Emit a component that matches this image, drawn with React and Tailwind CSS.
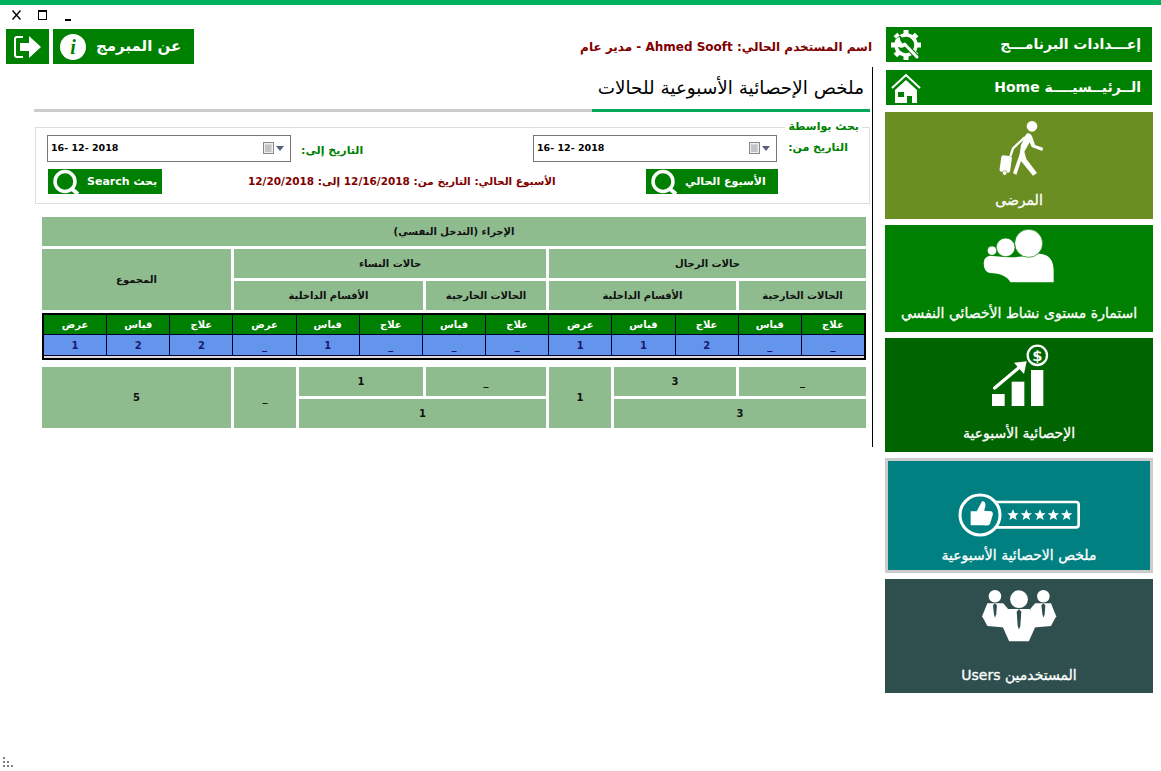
import React from 'react';

const GearIcon = () => (
  <svg width="30" height="30" viewBox="0 0 30 30">
    <g fill="#fff">
      {[0, 45, 90, 135, 180, 225, 270, 315].map((a) => (
        <rect key={a} x="12.5" y="0" width="5" height="6" transform={`rotate(${a} 15 15)`} />
      ))}
    </g>
    <circle cx="15" cy="15" r="10" fill="none" stroke="#fff" strokeWidth="3.5" />
    <path d="M7 7 L26 27" stroke="#008000" strokeWidth="5" fill="none" />
    <path d="M13.5 14 L26 27" stroke="#fff" strokeWidth="3" strokeLinecap="round" fill="none" />
    <path d="M8.5 7 A5.5 5.5 0 1 0 15.5 13.5 L12 14 L9.5 11 Z" fill="#fff" />
  </svg>
);

const HomeIcon = () => (
  <svg width="30" height="30" viewBox="0 0 30 30">
    <path d="M1 15 L15 2 L29 15" fill="none" stroke="#fff" strokeWidth="2" />
    <path d="M4 17 L15 7 L26 17 L26 30 L4 30 Z" fill="#fff" />
    <rect x="7" y="19" width="6" height="5" fill="#008000" />
    <rect x="16" y="23" width="5" height="7" fill="#008000" />
  </svg>
);

const ExitIcon = () => (
  <svg width="30" height="24" viewBox="0 0 30 24">
    <path d="M10 2 L4 2 Q2 2 2 4 L2 20 Q2 22 4 22 L10 22" fill="none" stroke="#fff" strokeWidth="2" />
    <path d="M7 8 L16 8 L16 1 L28 12 L16 23 L16 16 L7 16 Z" fill="#fff" />
  </svg>
);

const InfoIcon = () => (
  <div className="flex h-[26px] w-[26px] items-center justify-center rounded-full bg-white text-[20px] font-bold italic leading-none text-[#008000] [font-family:'Liberation_Serif',serif]">
    i
  </div>
);

const SearchIcon = () => (
  <svg width="32" height="25" viewBox="0 0 32 25" className="block">
    <circle cx="14" cy="12.5" r="10" fill="none" stroke="#fff" strokeWidth="3.5" />
    <path d="M21 20 L27 25" stroke="#fff" strokeWidth="4" />
  </svg>
);

const CalendarIcon = () => (
  <div className="flex items-center gap-px">
    <svg width="12" height="13" viewBox="0 0 12 13">
      <rect x="0.5" y="0.5" width="10" height="11" fill="#eceef2" stroke="#888" />
      <path d="M2 3 H9 M2 5 H9 M2 7 H9 M2 9 H9 M3 3 V10 M5 3 V10 M7 3 V10" stroke="#9a9a9a" strokeWidth="0.6" />
    </svg>
    <svg width="8" height="5" viewBox="0 0 8 5">
      <path d="M0 0 H8 L4 5 Z" fill="#56607a" />
    </svg>
  </div>
);

const TravelerIcon = () => (
  <svg width="48" height="58" viewBox="355 358 144 174">
    <circle cx="457" cy="380" r="16" fill="#fff" />
    <path d="M440 402 Q452 398 458 412 L466 436 L490 444 L488 454 L456 442 L450 428 L434 456 L440 478 L472 520 L460 528 L424 484 L410 526 L400 520 L420 464 L424 436 Z" fill="#fff" />
    <path d="M436 412 L400 446 L392 470" stroke="#fff" strokeWidth="7" fill="none" />
    <rect x="362" y="468" width="32" height="50" rx="6" fill="#fff" transform="rotate(8 379 494)" />
    <circle cx="375" cy="520" r="7" fill="#fff" stroke="#6b8e23" strokeWidth="2" />
  </svg>
);

const PeopleIcon = () => (
  <svg width="72" height="56" viewBox="310 688 216 168">
    <path d="M375 772 Q430 775 480 762 Q520 765 522 810 L522 848 L392 848 Q380 822 330 820 Q312 815 312 790 Q312 772 330 768 Z" fill="#fff" />
    <circle cx="447" cy="731" r="42" fill="#fff" stroke="#008000" strokeWidth="2" />
    <circle cx="378" cy="743" r="28" fill="#fff" stroke="#008000" strokeWidth="2" />
    <circle cx="337" cy="753" r="14" fill="#fff" stroke="#008000" strokeWidth="2" />
  </svg>
);

const ChartIcon = () => (
  <svg width="60" height="66" viewBox="325 25 180 198">
    <rect x="334" y="178" width="38" height="36" fill="#fff" />
    <rect x="393" y="141" width="38" height="73" fill="#fff" />
    <rect x="451" y="106" width="37" height="108" fill="#fff" />
    <path d="M342 160 L418 96" stroke="#fff" strokeWidth="10" strokeLinecap="round" />
    <path d="M400 84 L438 80 L430 118 Z" fill="#fff" />
    <circle cx="470" cy="62" r="29" fill="none" stroke="#fff" strokeWidth="7" />
    <text x="470" y="78" textAnchor="middle" fontSize="44" fontWeight="700" fill="#fff" fontFamily="'DejaVu Sans',sans-serif">$</text>
  </svg>
);

const Star = ({ x }) => (
  <path
    transform={`translate(${x} 541)`}
    d="M0 -17 L5 -5.5 L17 -5 L7.5 3 L11 15 L0 8.5 L-11 15 L-7.5 3 L-17 -5 L-5 -5.5 Z"
    fill="#fff"
  />
);

const RatingIcon = () => (
  <svg width="122" height="46" viewBox="232 472 366 138">
    <rect x="330" y="502" width="264" height="76" rx="8" fill="none" stroke="#fff" strokeWidth="8" />
    <circle cx="298" cy="541" r="60" fill="#008080" stroke="#fff" strokeWidth="9" />
    <path d="M270 530 L288 530 L304 500 Q316 498 314 516 L310 528 L332 530 Q340 534 334 548 L328 568 Q324 574 310 572 L270 572 Z" fill="#fff" />
    {[397, 437, 478, 518, 558].map((x) => (
      <Star key={x} x={x} />
    ))}
  </svg>
);

const UsersIcon = () => (
  <svg width="76" height="56" viewBox="303 760 230 170">
    <circle cx="345" cy="785" r="19" fill="#fff" />
    <circle cx="492" cy="785" r="19" fill="#fff" />
    <path d="M322 806 L370 806 L385 824 L375 880 L322 875 L306 846 Z" fill="#fff" />
    <path d="M515 806 L467 806 L452 824 L462 880 L515 875 L531 846 Z" fill="#fff" />
    <circle cx="418" cy="794" r="27" fill="#fff" />
    <path d="M385 824 L451 824 L472 868 L448 922 L388 922 L364 868 Z" fill="#fff" />
    <path d="M345 806 L339 812 L342 840 L345 850 L349 840 L351 812 Z" fill="#2f4f4f" />
    <path d="M492 806 L486 812 L489 840 L492 850 L496 840 L498 812 Z" fill="#2f4f4f" />
    <path d="M418 824 L411 832 L414 875 L418 886 L422 875 L425 832 Z" fill="#2f4f4f" />
  </svg>
);

const NavButton = ({ label, icon, className }) => (
  <div className={`flex h-[35px] w-[266px] items-center justify-between bg-[#008000] pl-[5px] pr-[11px] ${className}`}>
    {icon}
    <span dir="rtl" className="whitespace-nowrap text-[14px] font-bold text-white">{label}</span>
  </div>
);

const Tile = ({ label, icon, bg, h, iconH, extra = '' }) => (
  <div className={`flex w-[268px] flex-col items-center ${bg} ${h} ${extra}`}>
    <div className={`flex items-start justify-center ${iconH}`}>{icon}</div>
    <span dir="rtl" className="whitespace-nowrap text-[14px] leading-[18px] text-white [-webkit-text-stroke:0.3px_white]">{label}</span>
  </div>
);

const Cell = ({ children, className }) => (
  <div dir="rtl" className={`flex items-center justify-center bg-[#8fbc8f] text-[10px] font-bold text-[#111] ${className}`}>
    {children}
  </div>
);

const DateBox = () => (
  <div className="flex h-[27px] w-[244px] items-center justify-between border border-[#777] bg-white pl-[3px] pr-[6px] text-[9.5px] font-bold text-black">
    <span>16- 12- 2018</span>
    <CalendarIcon />
  </div>
);

const GreenBtn = ({ label, w }) => (
  <div className={`flex h-[25px] items-center overflow-hidden bg-[#008000] pl-[3px] ${w}`}>
    <SearchIcon />
    <span dir="rtl" className="ml-[4px] whitespace-nowrap pt-[2px] text-[11px] font-bold text-white">{label}</span>
  </div>
);

const headers = ['عرض', 'قياس', 'علاج', 'عرض', 'قياس', 'علاج', 'قياس', 'علاج', 'عرض', 'قياس', 'علاج', 'قياس', 'علاج'];
const values = ['1', '2', '2', '_', '1', '_', '_', '_', '1', '1', '2', '_', '_'];

export default function App() {
  return (
    <div className="relative min-h-[771px] bg-white [font-family:'DejaVu_Sans',sans-serif]">
      <div className="h-[5px] bg-[#00b05c]" />
      <div className="flex">
        {/* main column */}
        <div className="w-[885px]">
          <div className="flex h-[24px] items-start gap-[17px] pl-[12px] pt-[5px]">
            <svg width="9" height="10" viewBox="0 0 9 10"><path d="M0.5 0.5 L8.5 9.5 M8.5 0.5 L0.5 9.5" stroke="#000" strokeWidth="1.4" /></svg>
            <div className="h-[10px] w-[9px] border border-t-2 border-black" />
            <div className="ml-[1px] mt-[9px] h-[2px] w-[6px] bg-black" />
          </div>
          <div className="flex h-[38px] items-start pl-[6px] pr-[13px]">
            <div className="flex h-[35px] w-[43px] items-center justify-center bg-[#008000]"><ExitIcon /></div>
            <div className="ml-[4px] flex h-[35px] w-[141px] items-center bg-[#008000] pl-[7px]">
              <InfoIcon />
              <span dir="rtl" className="ml-[10px] whitespace-nowrap text-[15px] font-bold text-white">عن المبرمج</span>
            </div>
            <div dir="rtl" className="mt-[9px] flex-1 whitespace-nowrap text-[12px] font-bold text-[#800000]">
              اسم المستخدم الحالي: Ahmed Sooft - مدير عام
            </div>
          </div>

          <div className="ml-[34px] h-[380px] w-[839px] border-r border-black">
            <div dir="rtl" className="h-[42px] pr-[8px] pt-[7px] text-[18.4px] leading-[27px] text-black">
              ملخص الإحصائية الأسبوعية للحالات
            </div>
            <div className="flex h-[3px] w-[836px]">
              <div className="w-[558px] bg-[#ccc]" />
              <div className="flex-1 bg-[#00a85a]" />
            </div>

            {/* search box */}
            <fieldset className="ml-[1px] mt-[10px] h-[82px] w-[835px] border border-[#ddd] pl-[11px] pr-[9px]">
              <legend dir="rtl" className="ml-auto mr-[-2px] px-[3px] text-[11px] font-bold leading-[10px] text-[#008000]">بحث بواسطة</legend>
              <div className="flex items-start pt-[3px]">
                <DateBox />
                <div dir="rtl" className="ml-[10px] mt-[8px] w-[232px] text-left text-[11px] font-bold text-[#008000]">التاريخ إلى:</div>
                <DateBox />
                <div dir="rtl" className="mr-[12px] mt-[5px] flex-1 text-[11px] font-bold text-[#008000]">التاريخ من:</div>
              </div>
              <div className="mt-[7px] flex items-center">
                <div className="ml-[1px]"><GreenBtn label="بحث Search" w="w-[114px]" /></div>
                <div dir="rtl" className="ml-[86px] w-[310px] text-left text-[10.5px] font-bold text-[#800000]">
                  الأسبوع الحالي: التاريخ من: 12/16/2018 إلى: 12/20/2018
                </div>
                <div className="ml-[88px]"><GreenBtn label="الأسبوع الحالي" w="w-[132px]" /></div>
              </div>
            </fieldset>

            {/* report headers */}
            <div className="ml-[8px] mt-[13px] flex w-[824px] flex-col gap-[3px]">
              <Cell className="h-[29px]">الإجراء (التدخل النفسي)</Cell>
              <div className="flex gap-[3px]">
                <Cell className="w-[189px]">المجموع</Cell>
                <div className="flex w-[312px] flex-col gap-[3px]">
                  <Cell className="h-[29px]">حالات النساء</Cell>
                  <div className="flex gap-[3px]">
                    <Cell className="h-[29px] w-[189px]">الأقسام الداخلية</Cell>
                    <Cell className="h-[29px] flex-1">الحالات الخارجية</Cell>
                  </div>
                </div>
                <div className="flex flex-1 flex-col gap-[3px]">
                  <Cell className="h-[29px]">حالات الرجال</Cell>
                  <div className="flex gap-[3px]">
                    <Cell className="h-[29px] w-[187px]">الأقسام الداخلية</Cell>
                    <Cell className="h-[29px] flex-1">الحالات الخارجية</Cell>
                  </div>
                </div>
              </div>

              {/* data table */}
              <div className="h-[47px] border-2 border-t-[2px] border-black bg-[#ddd]">
                <div className="grid grid-cols-13 bg-[#000033] gap-x-px gap-y-px pb-px">
                  {headers.map((h, i) => (
                    <div key={i} className="flex h-[19px] items-center justify-center bg-[#008000] text-[10px] font-bold text-white">{h}</div>
                  ))}
                  {values.map((v, i) => (
                    <div key={i} className="flex h-[20px] items-center justify-center bg-[#6495ed] text-[10px] font-bold text-[#191970]">{v}</div>
                  ))}
                </div>
              </div>

              {/* totals */}
              <div className="mt-[4px] flex gap-[3px]">
                <Cell className="w-[189px]">5</Cell>
                <Cell className="w-[62px]">_</Cell>
                <div className="flex w-[247px] flex-col gap-[3px]">
                  <div className="flex gap-[3px]">
                    <Cell className="h-[29px] w-[124px]">1</Cell>
                    <Cell className="h-[29px] flex-1">_</Cell>
                  </div>
                  <Cell className="h-[29px]">1</Cell>
                </div>
                <Cell className="w-[62px]">1</Cell>
                <div className="flex flex-1 flex-col gap-[3px]">
                  <div className="flex gap-[3px]">
                    <Cell className="h-[29px] w-[122px]">3</Cell>
                    <Cell className="h-[29px] flex-1">_</Cell>
                  </div>
                  <Cell className="h-[29px]">3</Cell>
                </div>
              </div>
            </div>
          </div>
        </div>

        {/* sidebar */}
        <div className="flex w-[268px] flex-col items-center pt-[22px]">
          <NavButton label="إعـــدادات البرنامـــج" icon={<GearIcon />} />
          <NavButton label="الــرئيــسيــــة Home" icon={<HomeIcon />} className="mt-[8px]" />
          <div className="mt-[7px] flex flex-col gap-[6px]">
            <Tile label="المرضى" icon={<div className="ml-[6px]"><TravelerIcon /></div>} bg="bg-[#6b8e23]" h="h-[107px]" iconH="h-[79px] pt-[7px]" />
            <Tile label="استمارة مستوى نشاط الأخصائي النفسي" icon={<PeopleIcon />} bg="bg-[#008000]" h="h-[107px]" iconH="h-[79px] pt-[4px]" />
            <Tile label="الإحصائية الأسبوعية" icon={<ChartIcon />} bg="bg-[#006400]" h="h-[114px]" iconH="h-[86px] pt-[5px]" />
            <Tile label="ملخص الاحصائية الأسبوعية" icon={<RatingIcon />} bg="bg-[#008080]" h="h-[115px]" iconH="h-[85px] pt-[31px]" extra="border-[3px] border-[#ccc]" />
            <Tile label="المستخدمين Users" icon={<UsersIcon />} bg="bg-[#2f4f4f]" h="h-[114px]" iconH="h-[87px] pt-[9px]" />
          </div>
        </div>
      </div>

      {/* resize grip */}
      <svg width="14" height="12" viewBox="0 0 14 12" className="absolute left-[2px] top-[756px]">
        <path d="M1 1h2v2H1z M1 5h2v2H1z M5 5h2v2H5z M1 9h2v2H1z M5 9h2v2H5z M9 9h2v2H9z" fill="#808080" />
      </svg>
    </div>
  );
}
